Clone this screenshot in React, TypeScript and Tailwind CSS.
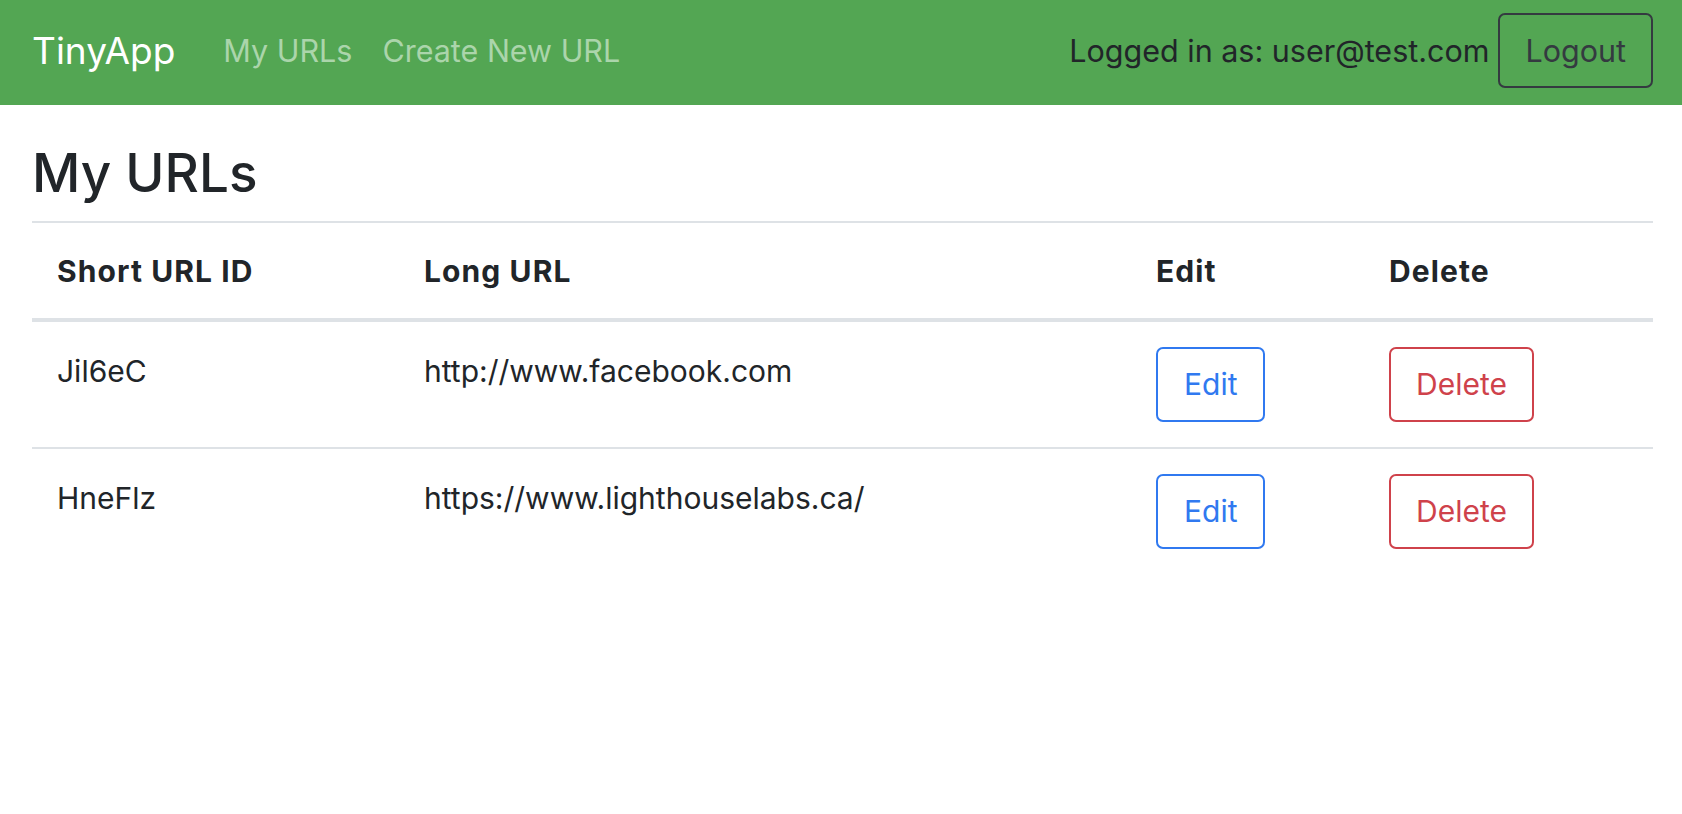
const urls = [
  { id: "Jil6eC", longURL: "http://www.facebook.com" },
  { id: "HneFlz", longURL: "https://www.lighthouselabs.ca/" },
];

const Navbar = () => {
  return (
    <nav className="flex h-[105px] items-center bg-[#53a653] pb-[4px] pl-[32px] pr-[29px]">
      <a href="#" className="mr-[33px] text-[37px] leading-none text-white">
        TinyApp
      </a>
      <a href="#" className="px-[15px] text-[30.5px] text-[#abd5ab]">
        My URLs
      </a>
      <a href="#" className="px-[15px] text-[30.5px] text-[#abd5ab]">
        Create New URL
      </a>
      <div className="ml-auto flex items-center gap-[9px]">
        <span className="text-[30.5px] text-[#212529]">Logged in as: user@test.com</span>
        <button className="h-[75px] rounded-[7px] border-2 border-[#343a40] px-[25px] text-[30.5px] text-[#343a40]">
          Logout
        </button>
      </div>
    </nav>
  );
};

const App = () => {
  return (
    <div className="min-h-screen bg-white font-['Inter',sans-serif] text-[#212529]">
      <Navbar />
      <main className="pl-[32px] pr-[29px]">
        <h1 className="mb-[15px] mt-[37px] text-[53px] font-medium leading-[1.2]">My URLs</h1>
        <table className="w-full border-collapse text-left text-[30px]">
          <thead>
            <tr className="border-t-2 border-b-4 border-[#dee2e6]">
              <th className="w-[367px] px-[25px] pb-[24px] pt-[25px] font-bold leading-[46px] tracking-[1.1px]">Short URL ID</th>
              <th className="w-[732px] px-[25px] pb-[24px] pt-[25px] font-bold leading-[46px] tracking-[1.1px]">Long URL</th>
              <th className="w-[233px] px-[25px] pb-[24px] pt-[25px] font-bold leading-[46px] tracking-[1.1px]">Edit</th>
              <th className="px-[25px] pb-[24px] pt-[25px] font-bold leading-[46px] tracking-[1.1px]">Delete</th>
            </tr>
          </thead>
          <tbody>
            {urls.map((url, i) => (
              <tr key={url.id} className={i > 0 ? "border-t-2 border-[#dee2e6]" : ""}>
                <td className="px-[25px] py-[25px] align-top leading-[48px]">{url.id}</td>
                <td className="px-[25px] py-[25px] align-top leading-[48px]">{url.longURL}</td>
                <td className="px-[25px] py-[25px] align-top">
                  <button className="h-[75px] rounded-[7px] border-2 border-[#3079f0] px-[26px] text-[#3079f0]">
                    Edit
                  </button>
                </td>
                <td className="px-[25px] py-[25px] align-top">
                  <button className="h-[75px] rounded-[7px] border-2 border-[#cf424b] px-[25px] text-[#cf424b]">
                    Delete
                  </button>
                </td>
              </tr>
            ))}
          </tbody>
        </table>
      </main>
    </div>
  );
};

export default App;
